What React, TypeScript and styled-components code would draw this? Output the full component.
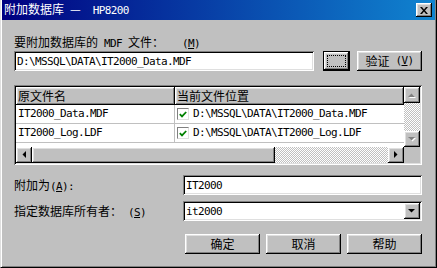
import React from 'react';
import styled, { createGlobalStyle, css } from 'styled-components';

const GlobalStyle = createGlobalStyle`
	html, body {
		margin: 0;
		padding: 0;
		background: #c0c0c0;
	}
	body {
		font-family: "Noto Sans CJK SC", "Noto Sans", sans-serif;
		font-size: 12px;
		color: #000;
	}
`

const raised = css`
	box-shadow: inset -1px -1px #000, inset 1px 1px #fff, inset -2px -2px #808080, inset 2px 2px #dfdfdf;
`

const sunken = css`
	box-shadow: inset 1px 1px #808080, inset -1px -1px #fff, inset 2px 2px #000, inset -2px -2px #dfdfdf;
`

const dither = css`
	background-color: #c0c0c0;
	background-image: repeating-conic-gradient(#fff 0 25%, #c0c0c0 0 50%);
	background-size: 2px 2px;
`

const Mono = styled.span`
	font-family: "DejaVu Sans Mono", "Liberation Mono", monospace;
	font-size: 11px;
	letter-spacing: -0.62px;
	white-space: pre;
`

const Key = styled.span`
	text-decoration: underline;
`

const Window = styled.div`
	width: 437px;
	height: 268px;
	box-sizing: border-box;
	display: flex;
	flex-direction: column;
	background: #c0c0c0;
	border-left: 1px solid #dfdfdf;
	border-right: 1px solid #000;
	border-bottom: 1px solid #000;
	box-shadow: inset 1px 0 #fff, inset -1px -1px #808080;
	padding: 0 1px 1px 1px;
`

const TitleBar = styled.div`
	height: 20px;
	flex: none;
	display: flex;
	align-items: center;
	padding: 0 3px 0 2px;
	background: linear-gradient(90deg, #000080, #1084d0);
	color: #fff;
`

const Caption = styled.div`
	flex: 1;
	line-height: 14px;
	white-space: pre;
`

const CloseButton = styled.div`
	width: 16px;
	height: 14px;
	box-sizing: border-box;
	display: flex;
	align-items: center;
	justify-content: center;
	background: #c0c0c0;
	${raised}
`

const Body = styled.div`
	flex: 1;
	display: flex;
	flex-direction: column;
	padding: 16px 13px 0 12px;
`

const Label = styled.div`
	height: 12px;
	line-height: 12px;
	white-space: pre;
`

const PathRow = styled.div`
	display: flex;
	align-items: center;
	margin-top: 3px;
	height: 20px;
`

const Field = styled.div<{ $width?: number }>`
	box-sizing: border-box;
	height: 20px;
	display: flex;
	align-items: center;
	padding: 0 2px 0 3px;
	background: #fff;
	white-space: pre;
	${sunken}
	${p => (p.$width ? `width: ${p.$width}px; flex: none;` : 'flex: 1;')}
`

const FieldText = styled.div`
	flex: 1;
	line-height: 12px;
`

const Button = styled.div<{ $width: number; $gap?: number }>`
	width: ${p => p.$width}px;
	margin-left: ${p => p.$gap || 0}px;
	height: 20px;
	box-sizing: border-box;
	display: flex;
	align-items: center;
	justify-content: center;
	flex: none;
	line-height: 12px;
	background: #c0c0c0;
	${raised}
`

const DefaultButton = styled(Button)`
	border: 1px solid #000;
	padding: 3px;
`

const FocusRect = styled.div`
	flex: 1;
	align-self: stretch;
	border: 1px dotted #000;
`

const ListView = styled.div`
	margin-top: 14px;
	height: 80px;
	box-sizing: border-box;
	padding: 2px;
	background: #fff;
	${sunken}
	display: grid;
	grid-template-columns: 1fr 16px;
	grid-template-rows: 1fr 16px;
`

const Table = styled.div`
	display: flex;
	flex-direction: column;
	overflow: hidden;
`

const HeaderRow = styled.div`
	display: grid;
	grid-template-columns: 159px 1fr;
	height: 18px;
	flex: none;
`

const HeaderCell = styled.div`
	display: flex;
	align-items: center;
	padding-left: 2px;
	line-height: 12px;
	background: #c0c0c0;
	${raised}
`

const Row = styled.div`
	display: grid;
	grid-template-columns: 159px 1fr;
	height: 19px;
	flex: none;
`

const Cell = styled.div<{ $first?: boolean }>`
	display: flex;
	align-items: center;
	gap: 4px;
	padding-left: 2px;
	line-height: 12px;
	border-bottom: 1px solid #c0c0c0;
	${p => p.$first && 'border-right: 1px solid #c0c0c0;'}
`

const CheckBox = styled.span`
	width: 12px;
	height: 12px;
	box-sizing: border-box;
	flex: none;
	display: flex;
	align-items: center;
	justify-content: center;
	background: #fff;
	border: 1px solid #808080;
	border-right-color: #dfdfdf;
	border-bottom-color: #dfdfdf;
`

const VScroll = styled.div`
	display: flex;
	flex-direction: column;
	justify-content: space-between;
	${dither}
`

const HScroll = styled.div`
	display: flex;
	${dither}
`

const ScrollButton = styled.div`
	width: 16px;
	height: 16px;
	flex: none;
	box-sizing: border-box;
	display: flex;
	align-items: center;
	justify-content: center;
	background: #c0c0c0;
	${raised}
`

const Thumb = styled.div<{ $size: number }>`
	width: ${p => p.$size}px;
	flex: none;
	background: #c0c0c0;
	${raised}
`

const Spacer = styled.div`
	flex: 1;
`

const Corner = styled.div`
	background: #c0c0c0;
`

const FormRow = styled.div<{ $top: number }>`
	display: grid;
	grid-template-columns: 169px 1fr;
	align-items: center;
	margin-top: ${p => p.$top}px;
	height: 20px;
`

const ButtonRow = styled.div`
	display: flex;
	justify-content: flex-end;
	margin-top: 13px;
`

type Dir = 'up' | 'down' | 'left' | 'right'

const arrowPoints: Record<Dir, string> = {
	up: '0,4 7,4 3.5,0.5',
	down: '0,0 7,0 3.5,3.5',
	left: '4,0 4,7 0.5,3.5',
	right: '0,0 0,7 3.5,3.5',
}

function Arrow({ dir, disabled }: { dir: Dir; disabled?: boolean }) {
	const vertical = dir === 'up' || dir === 'down'
	const w = vertical ? 8 : 5
	const h = vertical ? 5 : 8
	return (
		<svg width={w} height={h} viewBox={`0 0 ${w} ${h}`}>
			{disabled && <polygon points={arrowPoints[dir]} fill="#fff" transform="translate(1 1)" />}
			<polygon points={arrowPoints[dir]} fill={disabled ? '#808080' : '#000'} />
		</svg>
	)
}

const files = [
	{ name: 'IT2000_Data.MDF', path: 'D:\\MSSQL\\DATA\\IT2000_Data.MDF' },
	{ name: 'IT2000_Log.LDF', path: 'D:\\MSSQL\\DATA\\IT2000_Log.LDF' },
]

export default function App() {
	return (
		<>
			<GlobalStyle />
			<Window>
				<TitleBar>
					<Caption>
						附加数据库<Mono> </Mono>—<Mono>  HP8200</Mono>
					</Caption>
					<CloseButton>
						<svg width="8" height="7" viewBox="0 0 8 7">
							<path d="M0 0h2l2 2.4L6 0h2L5 3.5 8 7H6L4 4.6 2 7H0l3-3.5z" fill="#000" />
						</svg>
					</CloseButton>
				</TitleBar>
				<Body>
					<Label>
						要附加数据库的<Mono> MDF </Mono>文件：<Mono>   (<Key>M</Key>)</Mono>
					</Label>
					<PathRow>
						<Field $width={300}>
							<FieldText><Mono>{files[0].path}</Mono></FieldText>
						</Field>
						<DefaultButton $width={27} $gap={9}>
							<FocusRect />
						</DefaultButton>
						<Button $width={65} $gap={7}>
							验证<Mono> (<Key>V</Key>)</Mono>
						</Button>
					</PathRow>
					<ListView>
						<Table>
							<HeaderRow>
								<HeaderCell>原文件名</HeaderCell>
								<HeaderCell>当前文件位置</HeaderCell>
							</HeaderRow>
							{files.map((f, index) => (
								<Row key={index}>
									<Cell $first><Mono>{f.name}</Mono></Cell>
									<Cell>
										<CheckBox>
											<svg width="8" height="7" viewBox="0 0 8 7">
												<path d="M0.8 3.2 3 5.4 7.2 1" stroke="#008000" strokeWidth="1.8" fill="none" />
											</svg>
										</CheckBox>
										<Mono>{f.path}</Mono>
									</Cell>
								</Row>
							))}
						</Table>
						<VScroll>
							<ScrollButton><Arrow dir="up" disabled /></ScrollButton>
							<ScrollButton><Arrow dir="down" disabled /></ScrollButton>
						</VScroll>
						<HScroll>
							<ScrollButton><Arrow dir="left" /></ScrollButton>
							<Thumb $size={243} />
							<Spacer />
							<ScrollButton><Arrow dir="right" /></ScrollButton>
						</HScroll>
						<Corner />
					</ListView>
					<FormRow $top={10}>
						<Label>附加为<Mono>(<Key>A</Key>):</Mono></Label>
						<Field>
							<FieldText><Mono>IT2000</Mono></FieldText>
						</Field>
					</FormRow>
					<FormRow $top={6}>
						<Label>指定数据库所有者：<Mono> (<Key>S</Key>)</Mono></Label>
						<Field>
							<FieldText><Mono>it2000</Mono></FieldText>
							<ScrollButton><Arrow dir="down" /></ScrollButton>
						</Field>
					</FormRow>
					<ButtonRow>
						<Button $width={75}>确定</Button>
						<Button $width={75} $gap={6}>取消</Button>
						<Button $width={75} $gap={6}>帮助</Button>
					</ButtonRow>
				</Body>
			</Window>
		</>
	)
}
